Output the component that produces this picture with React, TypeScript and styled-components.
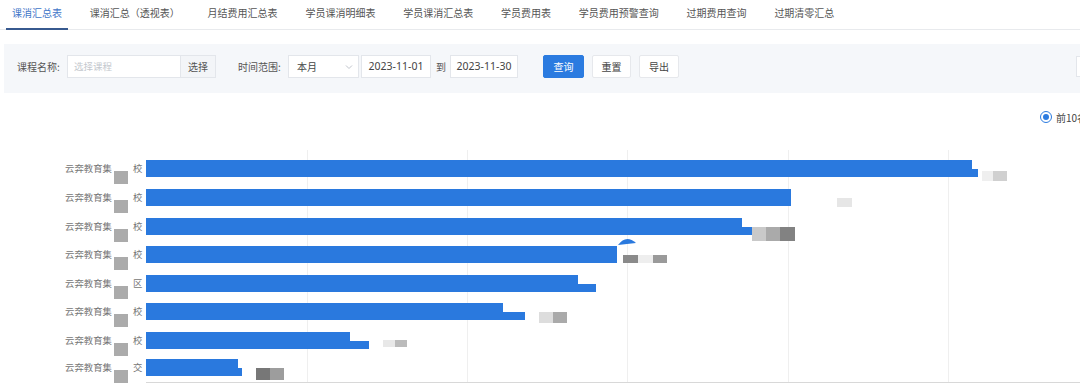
import React from 'react';
import styled, { createGlobalStyle } from 'styled-components';

const GlobalStyle = createGlobalStyle`
  html, body { margin: 0; padding: 0; background: #fff; overflow: hidden; }
  body { font-family: "Noto Sans CJK SC", "Noto Sans", sans-serif; }
  * { box-sizing: border-box; }
`;

const Page = styled.div`
  width: 1080px;
  height: 388px;
  overflow: hidden;
  background: #fff;
`;

const TabBar = styled.div`
  display: flex;
  height: 30px;
  padding-left: 6px;
  gap: 15.8px;
  border-bottom: 1px solid #e8eaed;
`;

const Tab = styled.div<{ $active?: boolean }>`
  flex: none;
  height: 30px;
  padding: 0 6px;
  line-height: 26px;
  font-size: 10px;
  white-space: nowrap;
  color: ${p => (p.$active ? '#3f76c8' : '#555')};
  border-bottom: 2px solid ${p => (p.$active ? '#37598f' : 'transparent')};
`;

const FilterPanel = styled.div`
  margin: 14px 0 0 4px;
  height: 49px;
  padding: 11px 0 0 13px;
  background: #f5f7fa;
  display: flex;
  align-items: flex-start;
  overflow: hidden;
`;

const FieldLabel = styled.span<{ $w: number; $ml?: number }>`
  flex: none;
  width: ${p => p.$w}px;
  margin-left: ${p => p.$ml ?? 0}px;
  height: 23px;
  line-height: 23px;
  font-size: 10px;
  color: #555;
  white-space: nowrap;
`;

const TextInput = styled.div`
  flex: none;
  width: 114px;
  height: 23px;
  line-height: 21px;
  padding-left: 6px;
  background: #fff;
  border: 1px solid #e3e6eb;
  font-size: 9.5px;
  color: #c4c8ce;
`;

const AddonButton = styled.div`
  flex: none;
  width: 35px;
  height: 23px;
  line-height: 21px;
  text-align: center;
  background: #f3f5f8;
  border: 1px solid #e3e6eb;
  border-left: none;
  font-size: 10px;
  color: #555;
`;

const SelectBox = styled.div`
  flex: none;
  width: 71px;
  height: 23px;
  padding: 0 4px 0 8px;
  background: #fff;
  border: 1px solid #e3e6eb;
  display: flex;
  align-items: center;
  justify-content: space-between;
  font-size: 10px;
  color: #444;
`;

const DateBox = styled.div<{ $w: number; $ml: number }>`
  flex: none;
  width: ${p => p.$w}px;
  margin-left: ${p => p.$ml}px;
  height: 23px;
  line-height: 21px;
  text-align: center;
  background: #fff;
  border: 1px solid #e3e6eb;
  font-family: "Noto Sans", "Open Sans", sans-serif;
  font-size: 10.5px;
  color: #444;
`;

const Sep = styled.span`
  flex: none;
  margin: 0 4px 0 5px;
  height: 23px;
  line-height: 23px;
  font-size: 10px;
  color: #555;
`;

const Button = styled.div<{ $primary?: boolean; $w: number; $ml: number }>`
  flex: none;
  width: ${p => p.$w}px;
  margin-left: ${p => p.$ml}px;
  height: 23px;
  line-height: 21px;
  text-align: center;
  font-size: 10px;
  border-radius: 2px;
  border: 1px solid ${p => (p.$primary ? '#2b7be0' : '#e6e8ec')};
  background: ${p => (p.$primary ? '#2b7be0' : '#fff')};
  color: ${p => (p.$primary ? '#fff' : '#444')};
`;

const EdgeBox = styled.div`
  flex: none;
  width: 30px;
  height: 21px;
  margin: 1px -26px 0 auto;
  background: #fff;
  border: 1px solid #e3e6eb;
`;

const ChartSection = styled.div`
  display: flex;
  flex-direction: column;
`;

const RadioRow = styled.div`
  height: 31px;
  padding-top: 17px;
  display: flex;
  justify-content: flex-end;
`;

const RadioItem = styled.div`
  flex: none;
  width: 60px;
  margin-right: -20px;
  height: 14px;
  display: flex;
  align-items: center;
  gap: 4px;
  font-size: 10px;
  color: #444;
  white-space: nowrap;
`;

const RadioDot = styled.span`
  flex: none;
  width: 12px;
  height: 12px;
  border-radius: 50%;
  border: 1px solid #2b7be0;
  display: flex;
  align-items: center;
  justify-content: center;
  &::after {
    content: '';
    width: 6px;
    height: 6px;
    border-radius: 50%;
    background: #2b7be0;
  }
`;

const ChartSvg = styled.svg`
  display: block;
  width: 1080px;
  height: 264px;
`;

const OFF = 124;
const BLUE = '#2a79de';

const tabs = [
  '课消汇总表',
  '课消汇总（透视表）',
  '月结费用汇总表',
  '学员课消明细表',
  '学员课消汇总表',
  '学员费用表',
  '学员费用预警查询',
  '过期费用查询',
  '过期清零汇总',
];

const bars = [
  { top: 160, end: 972, tail: 978, ch: '校' },
  { top: 189, end: 791, tail: 0, ch: '校' },
  { top: 218, end: 742, tail: 752, ch: '校' },
  { top: 246, end: 617, tail: 0, ch: '校' },
  { top: 275, end: 578, tail: 596, ch: '区' },
  { top: 303, end: 503, tail: 525, ch: '校' },
  { top: 332, end: 350, tail: 369, ch: '校' },
  { top: 359, end: 238, tail: 242, ch: '交' },
];

const blocks = [
  { x: 982, y: 171, w: 11, h: 10, c: '#efefef' },
  { x: 993, y: 171, w: 14, h: 10, c: '#d0d0d0' },
  { x: 837, y: 198, w: 15, h: 9, c: '#e6e6e6' },
  { x: 752, y: 227, w: 14, h: 14, c: '#c9c9c9' },
  { x: 766, y: 227, w: 14, h: 14, c: '#aaaaaa' },
  { x: 780, y: 227, w: 15, h: 14, c: '#828282' },
  { x: 623, y: 255, w: 15, h: 8, c: '#8a8a8a' },
  { x: 638, y: 255, w: 15, h: 8, c: '#eeeeee' },
  { x: 653, y: 255, w: 14, h: 8, c: '#9a9a9a' },
  { x: 539, y: 312, w: 14, h: 11, c: '#dddddd' },
  { x: 553, y: 312, w: 14, h: 11, c: '#aaaaaa' },
  { x: 383, y: 340, w: 12, h: 7, c: '#e8e8e8' },
  { x: 395, y: 340, w: 12, h: 7, c: '#bbbbbb' },
  { x: 256, y: 368, w: 14, h: 12, c: '#777777' },
  { x: 270, y: 368, w: 14, h: 12, c: '#9d9d9d' },
];

const gridX = [307, 467, 627, 788, 948];

function Chart() {
  return (
    <ChartSvg viewBox="0 0 1080 264">
      <defs>
        <clipPath id="lblclip">
          <rect x={0} y={0} width={112} height={264} />
        </clipPath>
      </defs>
      {gridX.map(x => (
        <line key={x} x1={x + 0.5} x2={x + 0.5} y1={150 - OFF} y2={382 - OFF} stroke="#efefef" strokeWidth={1} />
      ))}
      <line x1={146} x2={1080} y1={382.5 - OFF} y2={382.5 - OFF} stroke="#d8d8d8" strokeWidth={1} />
      {bars.map((b, i) => {
        const y = b.top - OFF;
        return (
          <g key={i}>
            <rect x={146} y={y} width={b.end - 146} height={17} fill={BLUE} />
            {b.tail > 0 && <rect x={146} y={y + 9} width={b.tail - 146} height={8} fill={BLUE} />}
            <text
              x={65}
              y={y + 11.5}
              fontSize={9.4}
              fill="#767676"
              fontFamily='"Noto Sans CJK SC", sans-serif'
              clipPath="url(#lblclip)"
            >
              云奔教育集团
            </text>
            <rect x={114} y={y + 11} width={14} height={13} fill="#ababab" />
            <text x={133} y={y + 11.5} fontSize={9.4} fill="#767676" fontFamily='"Noto Sans CJK SC", sans-serif'>
              {b.ch}
            </text>
          </g>
        );
      })}
      <path d={`M618 ${245 - OFF} Q626 ${234 - OFF} 636 ${243 - OFF} Z`} fill={BLUE} />
      {blocks.map((k, i) => (
        <rect key={i} x={k.x} y={k.y - OFF} width={k.w} height={k.h} fill={k.c} />
      ))}
    </ChartSvg>
  );
}

function ChevronDown() {
  return (
    <svg width="10" height="10" viewBox="0 0 10 10">
      <path d="M2 3.5 L5 6.5 L8 3.5" fill="none" stroke="#c0c4cc" strokeWidth="1" />
    </svg>
  );
}

export default function App() {
  return (
    <Page>
      <GlobalStyle />
      <TabBar>
        {tabs.map((t, i) => (
          <Tab key={t} $active={i === 0}>
            {t}
          </Tab>
        ))}
      </TabBar>
      <FilterPanel>
        <FieldLabel $w={50}>课程名称:</FieldLabel>
        <TextInput>选择课程</TextInput>
        <AddonButton>选择</AddonButton>
        <FieldLabel $w={50} $ml={22}>
          时间范围:
        </FieldLabel>
        <SelectBox>
          <span>本月</span>
          <ChevronDown />
        </SelectBox>
        <DateBox $w={70} $ml={2}>
          2023-11-01
        </DateBox>
        <Sep>到</Sep>
        <DateBox $w={68} $ml={0}>
          2023-11-30
        </DateBox>
        <Button $primary $w={41} $ml={25}>
          查询
        </Button>
        <Button $w={39} $ml={8}>
          重置
        </Button>
        <Button $w={40} $ml={8}>
          导出
        </Button>
        <EdgeBox />
      </FilterPanel>
      <ChartSection>
        <RadioRow>
          <RadioItem>
            <RadioDot />
            前10名
          </RadioItem>
        </RadioRow>
        <Chart />
      </ChartSection>
    </Page>
  );
}
